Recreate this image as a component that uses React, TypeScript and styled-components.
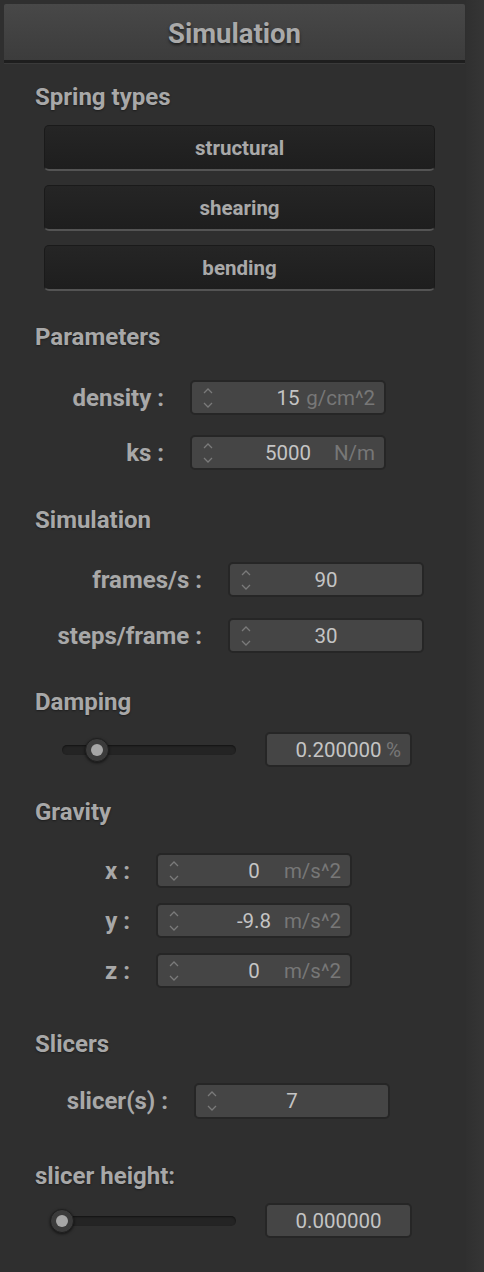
import styled, { createGlobalStyle } from 'styled-components'

const GlobalStyle = createGlobalStyle`
  html, body {
    margin: 0;
    padding: 0;
    background: #2f2f2f;
  }
  body {
    font-family: Roboto, "Liberation Sans", sans-serif;
  }
`

const Page = styled.div`
  display: flex;
  width: 484px;
  min-height: 1272px;
`

const Panel = styled.div`
  width: 466px;
  display: flex;
  flex-direction: column;
  background: #2f2f2f;
`

const Gutter = styled.div`
  flex: 1;
  background: linear-gradient(to right, #303030, #353535);
`

const Header = styled.div`
  margin: 4px 0 0 4px;
  width: 461px;
  height: 59px;
  padding-top: 2px;
  box-sizing: border-box;
  display: flex;
  align-items: center;
  justify-content: center;
  background: linear-gradient(#484848, #3c3c3c);
  border-bottom: 3px solid #1e1e1e;
  border-radius: 2px 2px 0 0;
  box-shadow: 0 1px 0 #3a3a3a;
  font-size: 27.5px;
  font-weight: 700;
  color: #a9a9a9;
  text-shadow: 0 2px 3px rgba(0, 0, 0, 0.55);
`

const Body = styled.div`
  padding-left: 35px;
  display: flex;
  flex-direction: column;
`

const Title = styled.div<{ $top: number }>`
  margin-top: ${(p) => p.$top}px;
  height: 24px;
  line-height: 24px;
  font-size: 24px;
  font-weight: 700;
  color: #a8a8a8;
  text-shadow: 0 1px 2px rgba(0, 0, 0, 0.4);
  white-space: nowrap;
`

const Stack = styled.div<{ $top: number; $gap: number }>`
  margin-top: ${(p) => p.$top}px;
  display: flex;
  flex-direction: column;
  gap: ${(p) => p.$gap}px;
`

const SpringButton = styled.button`
  margin-left: 9px;
  width: 391px;
  height: 46px;
  border: 1px solid #1a1a1a;
  border-bottom: 2px solid #545454;
  border-radius: 5px;
  background: linear-gradient(#252525, #1e1e1e);
  color: #a9a9a9;
  font-family: Roboto, "Liberation Sans", sans-serif;
  font-size: 20.5px;
  font-weight: 700;
  padding: 0;
`

const FieldRow = styled.div`
  display: flex;
  align-items: center;
`

const Label = styled.div<{ $width: number }>`
  width: ${(p) => p.$width}px;
  text-align: right;
  font-size: 24px;
  font-weight: 700;
  color: #a8a8a8;
  white-space: nowrap;
`

const NumberBox = styled.div<{ $height?: number }>`
  position: relative;
  margin-left: 26px;
  width: 196px;
  height: ${(p) => p.$height ?? 35}px;
  box-sizing: border-box;
  border: 2px solid #262626;
  border-radius: 5px;
  background: #454545;
  display: flex;
  align-items: center;
  justify-content: center;
  font-size: 20.5px;
  color: #c4c4c4;
`

const Spinner = styled.svg`
  position: absolute;
  left: 10px;
  top: 50%;
  transform: translateY(-50%);
`

const Unit = styled.span`
  position: absolute;
  right: 9px;
  top: 50%;
  transform: translateY(-50%);
  color: #777;
  font-size: 20.5px;
`

const SliderRow = styled.div<{ $top: number }>`
  margin-top: ${(p) => p.$top}px;
  display: flex;
  align-items: center;
`

const Track = styled.div`
  position: relative;
  margin-left: 27px;
  width: 174px;
  height: 10px;
  border-radius: 5px;
  background: #242424;
  box-shadow: inset 0 1px 2px rgba(0, 0, 0, 0.5);
`

const Thumb = styled.div`
  position: absolute;
  top: 50%;
  width: 24px;
  height: 24px;
  margin-left: -12px;
  margin-top: -12px;
  box-sizing: border-box;
  border-radius: 50%;
  background: #3b3b3b;
  border: 1px solid #1f1f1f;
  box-shadow: 0 1px 3px rgba(0, 0, 0, 0.6);
  display: flex;
  align-items: center;
  justify-content: center;
  &::after {
    content: '';
    width: 12px;
    height: 12px;
    border-radius: 50%;
    background: #a6a6a6;
  }
`

const ValueBox = styled.div`
  position: relative;
  margin-left: 29px;
  width: 147px;
  height: 35px;
  box-sizing: border-box;
  border: 2px solid #262626;
  border-radius: 5px;
  background: #454545;
  display: flex;
  align-items: center;
  justify-content: center;
  font-size: 20.5px;
  color: #c4c4c4;
`

const SpinIcon = () => (
  <Spinner width="12" height="24" viewBox="0 0 12 24">
    <path d="M2 7 L6 3 L10 7" stroke="#7a7a7a" strokeWidth="1.3" fill="none" />
    <path d="M2 17 L6 21 L10 17" stroke="#7a7a7a" strokeWidth="1.3" fill="none" />
  </Spinner>
)

interface Field {
  label: string
  value: string
  unit?: string
}

const NumberField = ({ field, labelWidth, height }: { field: Field; labelWidth: number; height?: number }) => (
  <FieldRow>
    <Label $width={labelWidth}>{field.label}</Label>
    <NumberBox $height={height}>
      <SpinIcon />
      <span>{field.value}</span>
      {field.unit && <Unit>{field.unit}</Unit>}
    </NumberBox>
  </FieldRow>
)

const Slider = ({ value, display, unit, top }: { value: number; display: string; unit?: string; top: number }) => (
  <SliderRow $top={top}>
    <Track>
      <Thumb style={{ left: `${value * 100}%` }} />
    </Track>
    <ValueBox>
      <span>{display}</span>
      {unit && <Unit>{unit}</Unit>}
    </ValueBox>
  </SliderRow>
)

const params: Field[] = [
  { label: 'density :', value: '15', unit: 'g/cm^2' },
  { label: 'ks :', value: '5000', unit: 'N/m' },
]

const sim: Field[] = [
  { label: 'frames/s :', value: '90' },
  { label: 'steps/frame :', value: '30' },
]

const gravity: Field[] = [
  { label: 'x :', value: '0', unit: 'm/s^2' },
  { label: 'y :', value: '-9.8', unit: 'm/s^2' },
  { label: 'z :', value: '0', unit: 'm/s^2' },
]

export default function App() {
  return (
    <>
      <GlobalStyle />
      <Page>
        <Panel>
          <Header>Simulation</Header>
          <Body>
            <Title $top={22}>Spring types</Title>
            <Stack $top={16} $gap={14}>
              <SpringButton>structural</SpringButton>
              <SpringButton>shearing</SpringButton>
              <SpringButton>bending</SpringButton>
            </Stack>

            <Title $top={34}>Parameters</Title>
            <Stack $top={31} $gap={20}>
              {params.map((f) => (
                <NumberField key={f.label} field={f} labelWidth={129} />
              ))}
            </Stack>

            <Title $top={38}>Simulation</Title>
            <Stack $top={30} $gap={21}>
              {sim.map((f) => (
                <NumberField key={f.label} field={f} labelWidth={167} />
              ))}
            </Stack>

            <Title $top={37}>Damping</Title>
            <Slider top={18} value={0.2} display="0.200000" unit="%" />

            <Title $top={33}>Gravity</Title>
            <Stack $top={29} $gap={15}>
              {gravity.map((f) => (
                <NumberField key={f.label} field={f} labelWidth={95} />
              ))}
            </Stack>

            <Title $top={44}>Slicers</Title>
            <Stack $top={27} $gap={0}>
              <NumberField field={{ label: 'slicer(s) :', value: '7' }} labelWidth={133} height={36} />
            </Stack>

            <Title $top={45}>slicer height:</Title>
            <Slider top={15} value={0} display="0.000000" />
          </Body>
        </Panel>
        <Gutter />
      </Page>
    </>
  )
}
